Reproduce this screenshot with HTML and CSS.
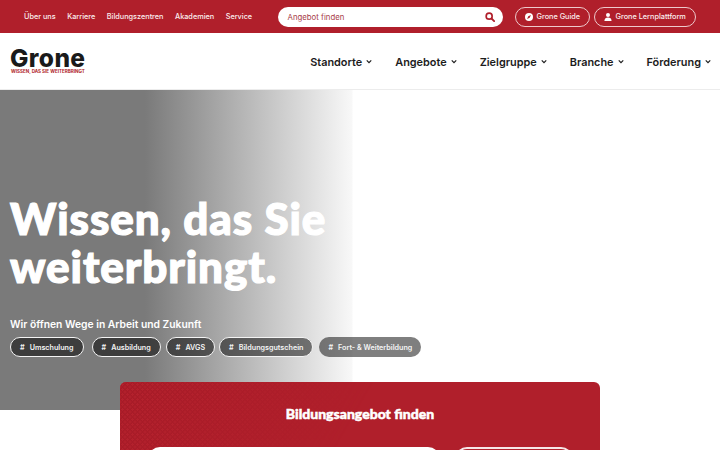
FILE: index.html
```html
<!DOCTYPE html>
<html lang="de">
<head>
<meta charset="utf-8">
<title>Grone</title>
<link rel="stylesheet" href="styles.css">
</head>
<body>
<div class="topbar">
  <nav class="toplinks">
    <a>Über uns</a><a>Karriere</a><a>Bildungszentren</a><a>Akademien</a><a>Service</a>
  </nav>
  <div class="search">
    <span>Angebot finden</span>
    <svg class="search-icon" viewBox="0 0 12 12" width="10" height="10"><circle cx="5" cy="5" r="3.6" fill="none" stroke="#b01f2b" stroke-width="2"/><path d="M7.8 7.8 11 11" stroke="#b01f2b" stroke-width="2.2" stroke-linecap="round"/></svg>
  </div>
  <a class="topbtn topbtn-guide">
    <svg viewBox="0 0 10 10" width="8" height="8"><circle cx="5" cy="5" r="5" fill="#fff"/><path d="M7.4 2.6 5.9 5.9 2.6 7.4 4.1 4.1Z" fill="#b01f2b"/></svg>
    Grone Guide
  </a>
  <a class="topbtn topbtn-learn">
    <svg viewBox="0 0 10 10" width="8" height="8"><circle cx="5" cy="2.5" r="2.5" fill="#fff"/><path d="M0.5 10C0.5 7 2.5 5.6 5 5.6S9.5 7 9.5 10Z" fill="#fff"/></svg>
    Grone Lernplattform
  </a>
</div>
<header class="mainbar">
  <div class="logo">
    <div class="logo-name">Grone</div>
    <div class="logo-claim">WISSEN, DAS SIE WEITERBRINGT</div>
  </div>
  <nav class="mainnav">
    <a>Standorte<svg class="chev" viewBox="0 0 8 6" width="6" height="5"><path d="M1 1.5 4 4.5 7 1.5" fill="none" stroke="#1c1c1c" stroke-width="1.6"/></svg></a>
    <a>Angebote<svg class="chev" viewBox="0 0 8 6" width="6" height="5"><path d="M1 1.5 4 4.5 7 1.5" fill="none" stroke="#1c1c1c" stroke-width="1.6"/></svg></a>
    <a>Zielgruppe<svg class="chev" viewBox="0 0 8 6" width="6" height="5"><path d="M1 1.5 4 4.5 7 1.5" fill="none" stroke="#1c1c1c" stroke-width="1.6"/></svg></a>
    <a>Branche<svg class="chev" viewBox="0 0 8 6" width="6" height="5"><path d="M1 1.5 4 4.5 7 1.5" fill="none" stroke="#1c1c1c" stroke-width="1.6"/></svg></a>
    <a>Förderung<svg class="chev" viewBox="0 0 8 6" width="6" height="5"><path d="M1 1.5 4 4.5 7 1.5" fill="none" stroke="#1c1c1c" stroke-width="1.6"/></svg></a>
  </nav>
</header>
<section class="hero">
  <h1>Wissen, das Sie<br>weiterbringt.</h1>
  <p class="lead">Wir öffnen Wege in Arbeit und Zukunft</p>
  <div class="tags">
    <a class="tag"><i>#</i>Umschulung</a>
    <a class="tag tag-wide"><i>#</i>Ausbildung</a>
    <a class="tag"><i>#</i>AVGS</a>
    <a class="tag tag-tight"><i>#</i>Bildungsgutschein</a>
    <a class="tag tag-last"><i>#</i>Fort- &amp; Weiterbildung</a>
  </div>
</section>
<section class="finder">
  <h2>Bildungsangebot finden</h2>
  <div class="finder-row">
    <div class="finder-input"></div>
    <div class="finder-btn"></div>
  </div>
</section>
</body>
</html>
```
FILE: styles.css
```css
* { box-sizing: border-box; }
html, body { margin: 0; padding: 0; height: 450px; overflow: hidden; background: #fff; }
body { font-family: Inter, "Liberation Sans", sans-serif; color: #1c1c1c; }

.topbar { height: 33px; background: #b01f2b; display: flex; align-items: center; padding-left: 24px; color: #fff; }
.toplinks { display: flex; gap: 11.5px; width: 253.5px; }
.toplinks a { font-size: 7.3px; font-weight: 500; white-space: nowrap; color: #fbeeee; }
.search { width: 225px; height: 20px; background: #fff; border-radius: 10px; display: flex; align-items: center; justify-content: space-between; padding: 0 8px 0 10px; color: #a8404a; font-size: 7.8px; }
.topbtn { height: 20px; border: 1px solid #eec9cc; border-radius: 10px; display: flex; align-items: center; gap: 4px; font-size: 7.3px; font-weight: 500; color: #fbeeee; white-space: nowrap; padding-left: 9px; }
.topbtn-guide { width: 75px; margin-left: 12px; }
.topbtn-learn { width: 102px; margin-left: 4px; }

.mainbar { height: 57px; border-bottom: 1px solid #ececec; display: flex; align-items: center; justify-content: space-between; padding: 0 9px 0 10px; }
.logo { display: flex; flex-direction: column; width: 76px; }
.logo-name { font-weight: 800; font-size: 24.5px; line-height: 22px; color: #1a1a1a; letter-spacing: 0.4px; }
.logo-claim { font-size: 4.55px; line-height: 6px; font-weight: 700; color: #b01f2b; white-space: nowrap; margin-left: 1px; }
.mainnav { display: flex; gap: 23px; padding-top: 1px; }
.mainnav a { font-size: 10.9px; font-weight: 600; display: flex; align-items: center; gap: 4px; white-space: nowrap; }

.hero { height: 320px; background: linear-gradient(90deg, #7a7a7a 0, #7a7a7a 145px, #f8f8f8 352px, #fff 353px); padding: 104px 0 0 10px; color: #fff; }
.hero h1 { margin: 0; font-family: Lato, sans-serif; font-weight: 900; font-size: 44px; line-height: 48px; letter-spacing: 0.9px; -webkit-text-stroke: 1.2px #fff; }
.lead { margin: 27px 0 0; font-size: 10.3px; line-height: 14px; font-weight: 600; }
.tags { display: flex; margin-top: 6px; gap: 5px; }
.tag { height: 20px; border-radius: 10px; border: 1px solid #f4f4f4; background: rgba(0, 0, 0, 0.5); color: #f4f4f4; font-size: 7.2px; font-weight: 600; display: flex; align-items: center; padding: 0 9px; white-space: nowrap; }
.tag i { font-style: normal; margin-right: 5px; }
.tag-wide { margin-left: 3px; }
.tag-tight { margin-left: -1px; }
.tag-last { margin-left: 1px; padding: 0 8px; border-color: transparent; }

.finder { width: 480px; height: 120px; margin: -28px auto 0; position: relative; overflow: hidden; background: #b01f2b; border-radius: 6px 6px 0 0; padding-top: 23px; text-align: center; color: #fff; }
.finder::before { content: ""; position: absolute; left: 0; top: 0; width: 260px; height: 100px; background-color: #a61b27; background-image: radial-gradient(circle, #b4222e 1px, transparent 1.4px), radial-gradient(circle, #b4222e 1px, transparent 1.4px); background-size: 5px 5px; background-position: 0 0, 2.5px 2.5px; -webkit-mask-image: linear-gradient(120deg, #000 0, transparent 80%); mask-image: linear-gradient(120deg, #000 0, transparent 80%); }
.finder h2 { position: relative; margin: 0; font-family: Lato, sans-serif; font-weight: 900; font-size: 14px; line-height: 18px; -webkit-text-stroke: 0.5px #fff; }
.finder-row { position: relative; display: flex; gap: 15px; margin: 24px 0 0 28px; }
.finder-input { width: 292px; height: 30px; background: #fff; border-radius: 12px; }
.finder-btn { width: 118px; height: 30px; border: 2px solid #f6e6e7; border-radius: 12px; }
```
